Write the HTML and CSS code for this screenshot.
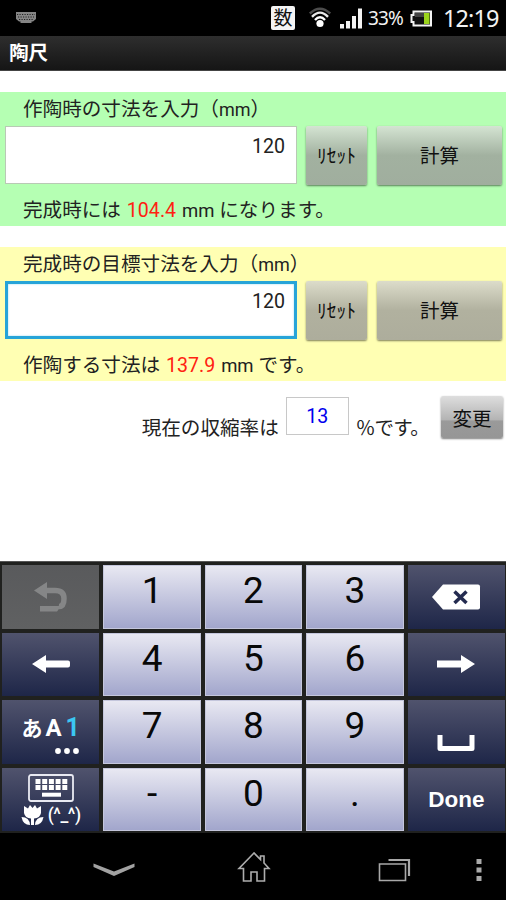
FILE: index.html
```html
<!DOCTYPE html>
<html lang="ja">
<head>
  <meta charset="UTF-8" />
  <meta name="viewport" content="width=device-width, initial-scale=1.0"/>
  <title>陶尺</title>
  <link rel="stylesheet" href="styles.css">
</head>
<body>

  <div class="status-bar">
    <svg class="status-keyboard" width="22" height="12" viewBox="0 0 22 12">
      <path d="M1 0h20v7l-3 2.500h-1.500v1.500h-11v-1.500h-1.500l-3-2.500z" fill="#858585"/>
      <path d="M2 2.500h18M3 5h16M4 7.500h14" stroke="#222" stroke-width="1" stroke-dasharray="1.200 1.300"/>
    </svg>
    <div class="status-icons">
      <span class="ime-mode">数</span>
      <svg class="wifi" width="24" height="22" viewBox="0 0 24 22" fill="none" stroke-width="2.400">
        <path d="M1.800 6.500Q12-3 22.200 6.500" stroke="#4c4c4c"/>
        <path d="M4 9.800Q12 1.500 20 9.800" stroke="#e8e8e8"/>
        <path d="M7 13Q12 7.500 17 13" stroke="#fff"/>
        <circle cx="12" cy="16.500" r="3.600" fill="#fff"/>
      </svg>
      <svg class="signal" width="23" height="21" viewBox="0 0 23 21" fill="#f2f2f2">
        <path d="M0 16h4v4.500H0zM6 13h4v7.500H6zM12 8h4v12.500h-4zM18 0.500h4v20h-4z"/>
      </svg>
      <span class="percent">33%</span>
      <svg class="battery" width="23" height="17" viewBox="0 0 23 17">
        <path d="M3.500 1.500h17.500v14H3.500v-3.500H1.500V5h2z" fill="#111" stroke="#f4f4f4" stroke-width="2"/>
        <path d="M5 3h9v4H5z" fill="#444"/>
        <path d="M14 3h5.500v11H14z" fill="#9bd41c"/>
      </svg>
      <span class="clock">12:19</span>
    </div>
  </div>

  <header class="title-bar">陶尺</header>

  <main class="app">
    <section class="panel green">
      <p class="label">作陶時の寸法を入力（<span class="mm">mm</span>）</p>
      <div class="field-row">
        <div class="field">120</div>
        <button class="btn reset">ﾘｾｯﾄ</button>
        <button class="btn calc">計算</button>
      </div>
      <p class="result">完成時には <span class="value">104.4</span> <span class="result-mm">mm</span> になります。</p>
    </section>

    <section class="panel yellow">
      <p class="label">完成時の目標寸法を入力（<span class="mm">mm</span>）</p>
      <div class="field-row">
        <div class="field focused">120</div>
        <button class="btn reset">ﾘｾｯﾄ</button>
        <button class="btn calc">計算</button>
      </div>
      <p class="result">作陶する寸法は <span class="value">137.9</span> <span class="result-mm">mm</span> です。</p>
    </section>

    <section class="rate-row">
      <span class="rate-text">現在の収縮率は</span>
      <div class="rate-field">13</div>
      <span class="rate-text unit">％です。</span>
      <button class="btn change">変更</button>
    </section>
  </main>

  <div class="keyboard">
    <button class="key disabled">
      <svg width="36" height="32" viewBox="0 0 36 32">
        <path d="M1 9.500L14 1v17z" fill="#858687"/>
        <path d="M13 9.500h9q9 0 9 8t-5 8" fill="none" stroke="#858687" stroke-width="5.500"/>
        <path d="M7 25h18l4-1-5 6.500H7z" fill="#858687"/>
      </svg>
    </button>
    <button class="key num">1</button>
    <button class="key num">2</button>
    <button class="key num">3</button>
    <button class="key dark">
      <svg width="50" height="26" viewBox="0 0 50 26">
        <path d="M1 13L12 .5h35q2 0 2 2v21q0 2-2 2H12z" fill="#fff"/>
        <path d="M23.500 7.500l12 11.500M35.500 7.500l-12 11.500" stroke="#242b50" stroke-width="3.500"/>
      </svg>
    </button>

    <button class="key dark">
      <svg width="40" height="18" viewBox="0 0 40 18"><path d="M1 9L15 0V5.500h22q2 0 2 2v3q0 2-2 2H15V18z" fill="#fff"/></svg>
    </button>
    <button class="key num">4</button>
    <button class="key num">5</button>
    <button class="key num">6</button>
    <button class="key dark">
      <svg width="40" height="18" viewBox="0 0 40 18"><path d="M39 9L25 0V5.500H1v7h24V18z" fill="#fff"/></svg>
    </button>

    <button class="key dark mode">
      <span class="mode-letters"><span class="kana">あ</span><span class="latin">A</span><span class="digit">1</span></span>
      <svg class="mode-dots" width="26" height="6" viewBox="0 0 26 6" fill="#fff"><circle cx="4" cy="3" r="2.900"/><circle cx="13" cy="3" r="2.900"/><circle cx="22" cy="3" r="2.900"/></svg>
    </button>
    <button class="key num">7</button>
    <button class="key num">8</button>
    <button class="key num">9</button>
    <button class="key dark space">
      <svg width="38" height="18" viewBox="0 0 38 18"><path d="M3 1v13.500h32V1" fill="none" stroke="#fff" stroke-width="5" stroke-linejoin="round"/></svg>
    </button>

    <button class="key dark symbols">
      <svg width="46" height="28" viewBox="0 0 46 28">
        <rect x="1" y="1" width="44" height="26" rx="2" fill="none" stroke="#e9eaf2" stroke-width="1.800"/>
        <path d="M7.500 7.500h32M7.500 13.500h32" stroke="#fff" stroke-width="5" stroke-dasharray="5 1.700"/>
        <path d="M14 20.700h19" stroke="#fff" stroke-width="4"/>
      </svg>
      <span class="symbols-line">
        <svg width="23" height="21" viewBox="0 0 23 21" fill="#fff">
          <path d="M3 1l4 2.500L9 0l2.500 3L14 0l2 3.500L20 1v7q-1 5-7 5.500V20h-3v-6.500Q4 13 3 8z"/>
          <path d="M.5 12q8 0 8.500 8Q2 20 .5 12zM22.500 12q-8 0-8.500 8 7 0 8.500-8z"/>
        </svg>
        <span class="face">(^_^)</span>
      </span>
    </button>
    <button class="key num">-</button>
    <button class="key num">0</button>
    <button class="key num">.</button>
    <button class="key dark done">Done</button>
  </div>

  <nav class="nav-bar">
    <svg width="42" height="14" viewBox="0 0 42 14"><path d="M.5.5L21 8.500 41.500.5v3.500L21 13 .5 4z" fill="#a2a2a2"/></svg>
    <svg width="34" height="32" viewBox="0 0 34 32"><path d="M17 2L2 17.500h4.500V30h7.500v-9h6v9h7.500V17.500H32L27 12V5h-3.500v3.500z" fill="none" stroke="#adadad" stroke-width="1.600"/></svg>
    <svg width="34" height="24" viewBox="0 0 34 24" fill="none" stroke="#a8a8a8" stroke-width="1.600"><path d="M1.500 6h26v16.500h-26z"/><path d="M10.500 2h20.500v16" stroke-width="2.200"/></svg>
    <svg width="6" height="24" viewBox="0 0 6 24" fill="#aaa"><path d="M.5 1h5v5h-5zM.5 9.500h5v5h-5zM.5 18h5v5h-5z"/></svg>
  </nav>

</body>
</html>
```
FILE: styles.css
```css
* { box-sizing: border-box; margin: 0; padding: 0; }
body {
  width: 506px;
  height: 900px;
  overflow: hidden;
  display: flex;
  flex-direction: column;
  background: #fff;
  color: #222;
  font-family: Roboto, "Noto Sans CJK JP", sans-serif;
}
button { border: none; font-family: inherit; color: inherit; }
svg { display: block; flex: none; }

/* Status bar */
.status-bar {
  height: 36px;
  flex: none;
  background: #000;
  display: flex;
  justify-content: space-between;
  padding: 0 8px 0 15px;
  color: #f2f2f2;
  font-family: "Noto Sans", "Noto Sans CJK JP", sans-serif;
}
.status-keyboard { margin-top: 12px; }
.status-icons { display: flex; align-items: center; }
.ime-mode {
  width: 24px;
  height: 24px;
  background: #f4f4f4;
  color: #111;
  border-radius: 2px;
  font-size: 19px;
  line-height: 24px;
  text-align: center;
}
.wifi { margin-left: 13px; }
.signal { margin-left: 8px; }
.percent { margin-left: 5px; width: 36px; font-size: 19px; letter-spacing: -0.9px; white-space: nowrap; }
.battery { margin-left: 6px; }
.clock { margin-left: 10px; width: 55px; font-size: 23.5px; letter-spacing: -0.9px; }

.title-bar {
  height: 35px;
  flex: none;
  padding-left: 9px;
  background: linear-gradient(#2e2e2e, #151515);
  border-bottom: 1px solid #444;
  color: #fff;
  font-size: 19.5px;
  font-weight: bold;
  line-height: 35px;
}

/* Calculator */
.app { height: 490px; flex: none; padding-top: 21px; }
.panel { height: 134px; margin-bottom: 21px; font-size: 19.6px; }
.green { background: #b5ffb3; }
.yellow { background: #ffffb3; }
.label { height: 34px; padding-left: 23px; line-height: 35px; }
.mm { font-size: 18px; }
.result { height: 41px; padding-left: 23px; line-height: 52px; white-space: nowrap; }
.result-mm { font-size: 18.5px; }
.value { color: #f21; margin: 0 1px; }
.field-row { display: flex; height: 59px; padding-left: 5px; }
.field {
  width: 292px;
  height: 58px;
  margin-right: 9px;
  padding-right: 11px;
  background: #fff;
  border: 1px solid #b9c9b5;
  text-align: right;
  line-height: 40px;
}
.field.focused { border: 3px solid #27a4d8; box-shadow: inset 0 0 2px #8fd3f0; padding-right: 9px; line-height: 36px; }
.btn {
  height: 59px;
  border-radius: 2px;
  color: #111;
  font-size: 19.5px;
  padding-bottom: 3px;
  box-shadow: 0 1px 2px rgba(0,0,0,0.5);
}
.reset { width: 61px; margin-right: 10px; }
.calc { width: 125px; }
.green .btn { background: linear-gradient(#d4e4d2, #a2b1a0 50%, #a0ae9e); }
.yellow .btn { background: linear-gradient(#dcdcca, #b1b19f 50%, #adad9c); }

.rate-row { display: flex; justify-content: flex-end; padding-right: 3px; margin-top: -6px; font-size: 19.6px; }
.rate-text { line-height: 65px; margin-right: 7px; }
.rate-text.unit { margin-right: 12px; letter-spacing: -0.8px; }
.rate-field {
  width: 63px;
  height: 38px;
  margin: 1px 7px 0 0;
  border: 1px solid #c8c8c8;
  color: #00e;
  text-align: center;
  line-height: 38px;
}
.change { width: 62px; height: 42px; padding-bottom: 0; background: linear-gradient(#dedede, #b4b4b4 56%, #9a9a9a 60%, #969696); }

/* Keyboard */
.keyboard {
  height: 272px;
  flex: none;
  display: grid;
  grid-template-columns: repeat(5, 1fr);
  grid-template-rows: repeat(4, 1fr);
  gap: 4px;
  padding: 3px 1px 2px 2px;
  background: #20211f;
  border-top: 1px solid #555;
}
.key { display: flex; align-items: center; justify-content: center; }
.num {
  align-items: flex-start;
  background: linear-gradient(#e8e8f2, #a2a6cc);
  border: 1px solid #c4c6dc;
  color: #080808;
  font-size: 37px;
  line-height: 49px;
}
.dark { background: linear-gradient(#50536d, #1e2648); color: #fff; }
.disabled { background: linear-gradient(#595a5c, #606162); }
.mode { flex-direction: column; }
.mode-letters {
  display: flex;
  align-items: baseline;
  font-size: 25px;
  font-weight: bold;
  line-height: 28px;
  margin-top: 4px;
}
.kana { font-size: 21px; }
.latin { margin: 0 4px 0 3px; font-size: 24px; }
.digit { color: #3bc7f2; }
.mode-dots { margin: 5px 0 0 32px; }
.space { padding-top: 22px; }
.symbols { flex-direction: column; gap: 2px; padding-top: 2px; }
.symbols-line { display: flex; align-items: center; gap: 4px; height: 22px; }
.face { font-size: 17.5px; font-weight: 500; line-height: 20px; letter-spacing: -0.4px; }
.done { padding-top: 2px; font-family: "Liberation Sans", sans-serif; font-size: 22.5px; font-weight: bold; }

/* Navigation bar */
.nav-bar {
  flex: 1;
  display: flex;
  align-items: center;
  padding: 6px 0 0 93px;
  background: #000;
}
.nav-bar svg:nth-child(2) { margin: -6px 0 0 102px; }
.nav-bar svg:nth-child(3) { margin-left: 107px; }
.nav-bar svg:nth-child(4) { margin-left: 64px; }
```
